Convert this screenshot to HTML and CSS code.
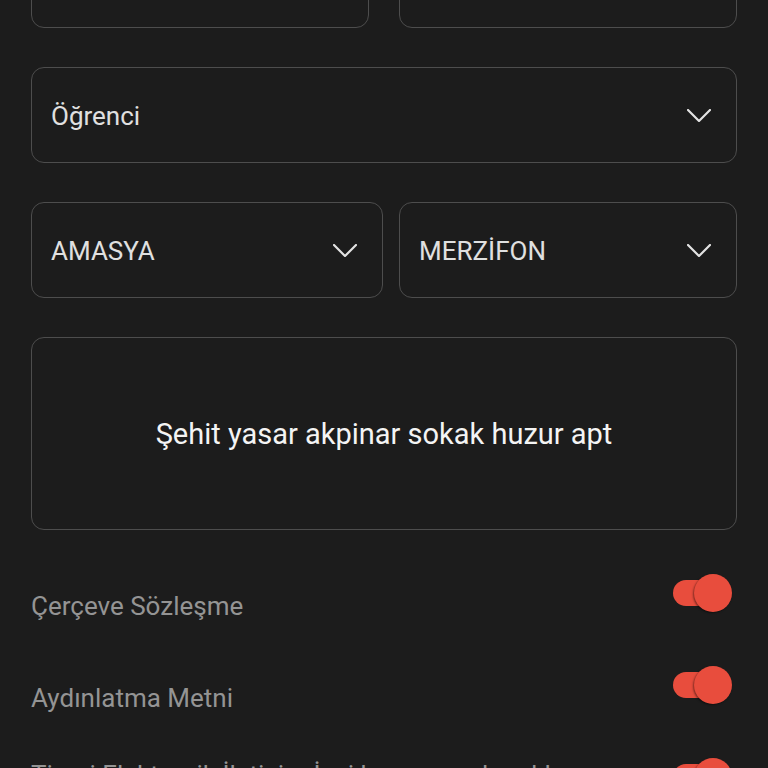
FILE: index.html
```html
<!DOCTYPE html>
<html lang="tr">
<head>
<meta charset="utf-8">
<title>Form</title>
<link rel="stylesheet" href="styles.css">
</head>
<body>
<main class="form">
  <div class="row row-top">
    <div class="field"></div>
    <div class="field"></div>
  </div>

  <div class="field select">
    <span class="value">Öğrenci</span>
    <svg class="chevron" viewBox="0 0 24 13" width="24" height="13"><path d="M1 1 L12 12 L23 1" fill="none" stroke="#e2e2e2" stroke-width="2.2" stroke-linecap="round" stroke-linejoin="round"/></svg>
  </div>

  <div class="row row-city">
    <div class="field select">
      <span class="value">AMASYA</span>
      <svg class="chevron" viewBox="0 0 24 13" width="24" height="13"><path d="M1 1 L12 12 L23 1" fill="none" stroke="#e2e2e2" stroke-width="2.2" stroke-linecap="round" stroke-linejoin="round"/></svg>
    </div>
    <div class="field select">
      <span class="value">MERZİFON</span>
      <svg class="chevron" viewBox="0 0 24 13" width="24" height="13"><path d="M1 1 L12 12 L23 1" fill="none" stroke="#e2e2e2" stroke-width="2.2" stroke-linecap="round" stroke-linejoin="round"/></svg>
    </div>
  </div>

  <div class="field address">Şehit yasar akpinar sokak huzur apt</div>

  <div class="consents">
    <div class="consent">
      <span class="label">Çerçeve Sözleşme</span>
      <span class="switch"><span class="track"></span><span class="thumb"></span></span>
    </div>
    <div class="consent">
      <span class="label">Aydınlatma Metni</span>
      <span class="switch"><span class="track"></span><span class="thumb"></span></span>
    </div>
    <div class="consent">
      <span class="label">Ticari Elektronik İletişim İzni kapsamında reklam ve pazarlama amaçlı ileti almak istiyorum.</span>
      <span class="switch"><span class="track"></span><span class="thumb"></span></span>
    </div>
  </div>
</main>
</body>
</html>
```

FILE: styles.css
```css
* { box-sizing: border-box; }

html, body {
  margin: 0;
  background: #1c1c1c;
}

body {
  padding: 0 31px;
  font-family: Roboto, "Noto Sans", sans-serif;
  overflow: hidden;
  height: 768px;
}

.form {
  margin-top: -68px;
  display: flex;
  flex-direction: column;
  gap: 39px;
}

.row {
  display: grid;
}

.row-top {
  grid-template-columns: 338px 338px;
  gap: 30px;
}

.row-city {
  grid-template-columns: 352px 338px;
  gap: 16px;
}

.field {
  height: 96px;
  border: 1.5px solid #4d4d4d;
  border-radius: 13px;
  background: #1c1c1c;
}

.select {
  display: flex;
  align-items: center;
  justify-content: space-between;
  padding: 0 25px 0 19px;
}

.value {
  color: #e0e0e0;
  font-size: 26px;
  line-height: 30px;
  padding-top: 2px;
}

.chevron {
  display: block;
  flex: none;
}

.address {
  height: 193px;
  display: flex;
  align-items: center;
  justify-content: center;
  color: #f4f4f4;
  font-size: 29px;
  line-height: 32px;
}

.consents {
  margin-top: 5px;
  display: flex;
  flex-direction: column;
  gap: 28px;
}

.consent {
  display: flex;
  align-items: center;
  justify-content: space-between;
}

.label {
  color: #949494;
  font-size: 26px;
  line-height: 30px;
  max-width: 560px;
}

.switch {
  position: relative;
  flex: none;
  width: 59px;
  height: 38px;
  margin-right: 5px;
  margin-bottom: 26px;
}

.track {
  position: absolute;
  left: 0;
  top: 6px;
  width: 44px;
  height: 26px;
  border-radius: 13px;
  background: #e84d3d;
}

.thumb {
  position: absolute;
  right: 0;
  top: 0;
  width: 38px;
  height: 38px;
  border-radius: 50%;
  background: #e84d3d;
  box-shadow: -1px 1px 2px rgba(0, 0, 0, 0.45);
}
```
